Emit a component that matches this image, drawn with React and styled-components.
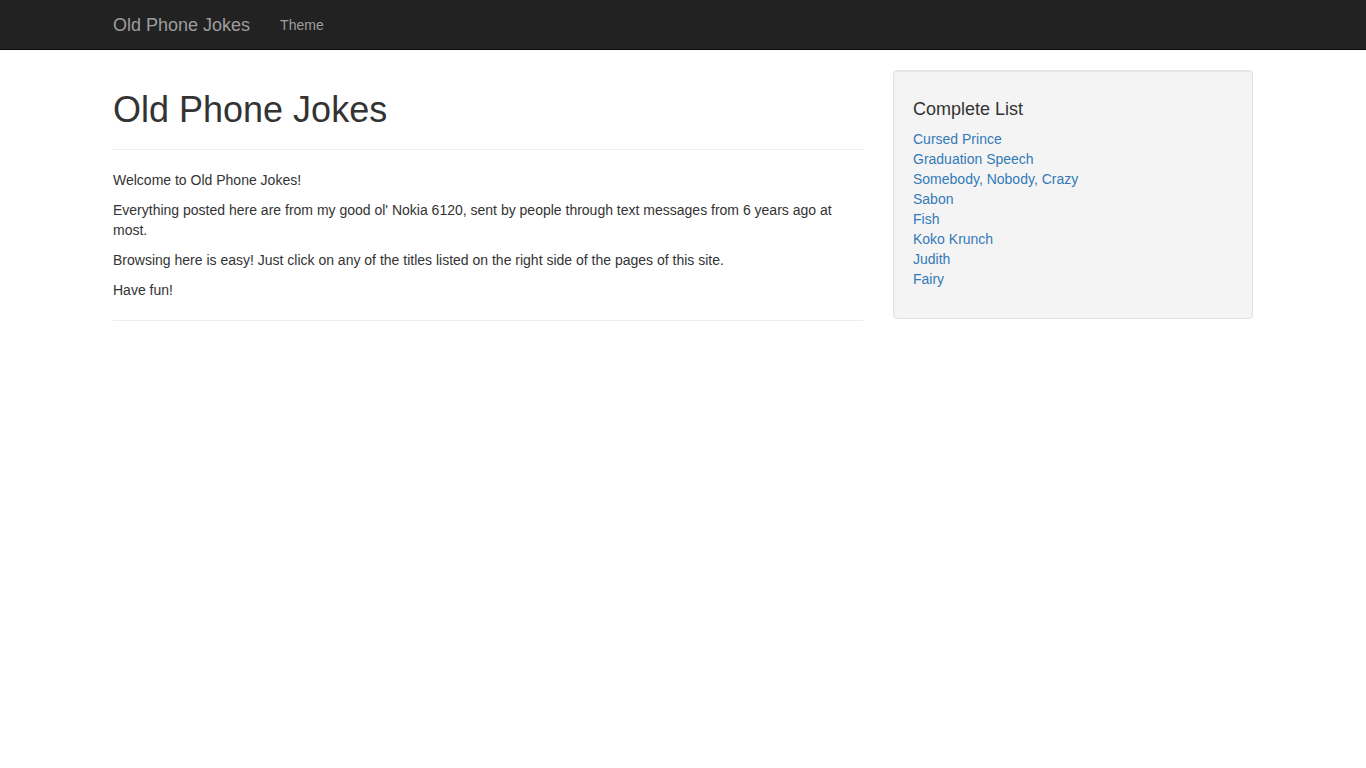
import styled, { createGlobalStyle } from 'styled-components'

const GlobalStyle = createGlobalStyle`
  * { box-sizing: border-box; }
  body {
    margin: 0;
    font-family: "Liberation Sans", Arial, Helvetica, sans-serif;
    font-size: 14px;
    line-height: 20px;
    color: #333333;
    background: #ffffff;
  }
`

// Top navigation bar
const Navbar = styled.nav`
  height: 50px;
  background: #222222;
  border-bottom: 1px solid #080808;
  margin-bottom: 20px;
`

const Container = styled.div`
  width: 1170px;
  margin: 0 auto;
  padding: 0 15px;
`

const NavInner = styled(Container)`
  display: flex;
  align-items: center;
  height: 49px;
`

const Brand = styled.a`
  margin-left: -15px;
  padding: 15px;
  font-size: 18px;
  line-height: 20px;
  color: #9d9d9d;
  text-decoration: none;
`

const NavLink = styled.a`
  padding: 15px;
  line-height: 20px;
  color: #9d9d9d;
  text-decoration: none;
`

const Row = styled.div`
  display: flex;
  margin: 0 -15px;
`

const Column = styled.div`
  width: ${(props) => props.span * 97.5}px;
  padding: 0 15px;
`

const Heading = styled.h1`
  font-size: 36px;
  font-weight: 500;
  line-height: 39px;
  margin: 20px 0 10px;
`

const Rule = styled.hr`
  margin: 20px 0;
  border: 0;
  border-top: 1px solid #eeeeee;
`

const Para = styled.p`
  margin: 0 0 10px;
`

// Sidebar well
const Well = styled.div`
  min-height: 20px;
  padding: 19px;
  background: #f4f4f4;
  border: 1px solid #e3e3e3;
  border-radius: 4px;
  box-shadow: inset 0 1px 1px rgba(0, 0, 0, 0.05);
`

const WellTitle = styled.h4`
  font-size: 18px;
  font-weight: 500;
  line-height: 19px;
  margin: 10px 0;
`

const LinkList = styled.ul`
  list-style: none;
  padding: 0;
  margin: 0 0 10px;
`

const JokeLink = styled.a`
  color: #337ab7;
  text-decoration: none;
`

const jokes = [
  'Cursed Prince',
  'Graduation Speech',
  'Somebody, Nobody, Crazy',
  'Sabon',
  'Fish',
  'Koko Krunch',
  'Judith',
  'Fairy',
]

export default function App() {
  return (
    <>
      <GlobalStyle />
      <Navbar>
        <NavInner>
          <Brand href="#">Old Phone Jokes</Brand>
          <NavLink href="#">Theme</NavLink>
        </NavInner>
      </Navbar>
      <Container>
        <Row>
          <Column span={8}>
            <Heading>Old Phone Jokes</Heading>
            <Rule />
            <Para>Welcome to Old Phone Jokes!</Para>
            <Para>
              Everything posted here are from my good ol' Nokia 6120, sent by people through text
              messages from 6 years ago at most.
            </Para>
            <Para>
              Browsing here is easy! Just click on any of the titles listed on the right side of the
              pages of this site.
            </Para>
            <Para>Have fun!</Para>
            <Rule />
          </Column>
          <Column span={4}>
            <Well>
              <WellTitle>Complete List</WellTitle>
              <LinkList>
                {jokes.map((j) => (
                  <li key={j}>
                    <JokeLink href="#">{j}</JokeLink>
                  </li>
                ))}
              </LinkList>
            </Well>
          </Column>
        </Row>
      </Container>
    </>
  )
}
